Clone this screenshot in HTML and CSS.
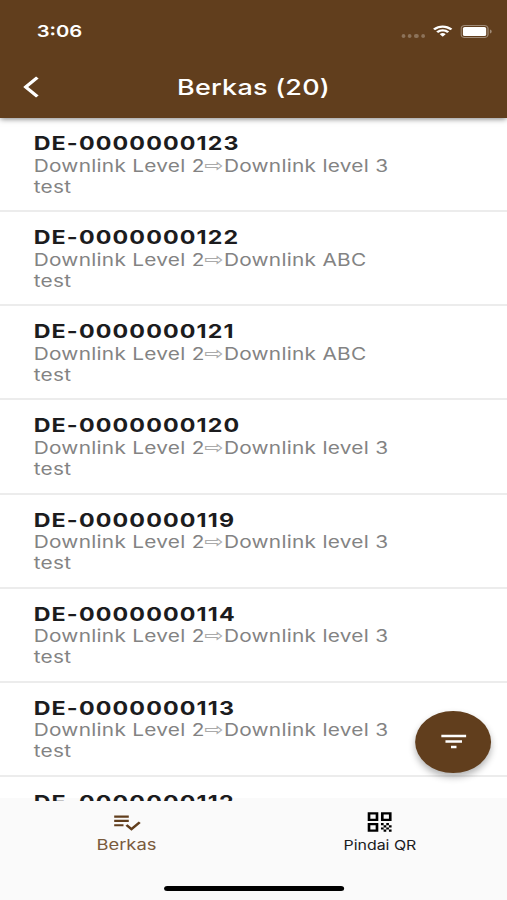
FILE: index.html
```html
<!DOCTYPE html>
<html lang="id">
<head>
<meta charset="utf-8">
<title>Berkas</title>
<link rel="stylesheet" href="styles.css">
</head>
<body>
<div class="screen">
  <header class="top">
    <div class="status">
      <span class="time">3:06</span>
      <div class="indicators">
        <div class="dots"><i></i><i></i><i></i><i></i></div>
        <svg class="wifi" viewBox="0 0 16 12"><path d="M8 2.4c2.2 0 4.2.85 5.7 2.25.1.1.3.1.4 0l1.1-1.1c.1-.1.1-.3 0-.4C11.2-.6 4.800-.6.8 3.150c-.1.1-.1.300 0 .4l1.100 1.100c.1.1.3.1.4 0A8.300 8.300 0 0 1 8 2.400zM8 6c1.200 0 2.350.45 3.250 1.250.1.1.3.1.4 0l1.100-1.100c.1-.1.1-.3 0-.4a6.900 6.900 0 0 0-9.500 0c-.1.1-.1.3 0 .4l1.100 1.100c.1.1.3.1.4 0C5.650 6.450 6.800 6 8 6zm2.200 2.700c.1-.1.1-.3 0-.4a3.400 3.400 0 0 0-4.400 0c-.1.1-.1.3 0 .4l2 2c.1.1.3.1.4 0z"/></svg>
        <svg class="battery" viewBox="0 0 26 13"><rect class="case" x=".5" y=".5" width="22" height="12" rx="3"/><rect x="2" y="2" width="19" height="9" rx="1.500"/><path class="tip" d="M24 4.500v4c1-.3 1.500-1.100 1.500-2s-.5-1.700-1.500-2z"/></svg>
      </div>
    </div>
    <div class="bar">
      <svg class="back" viewBox="0 0 13 22"><path d="M11.500 1.500 2 11l9.500 9.500"/></svg>
      <h1>Berkas (20)</h1>
    </div>
  </header>
  <main class="list">
    <article class="row"><h2>DE-0000000123</h2><p>Downlink Level 2<span class="arrow">⇨</span>Downlink level 3</p><p>test</p></article>
    <article class="row"><h2>DE-0000000122</h2><p>Downlink Level 2<span class="arrow">⇨</span>Downlink ABC</p><p>test</p></article>
    <article class="row"><h2>DE-0000000121</h2><p>Downlink Level 2<span class="arrow">⇨</span>Downlink ABC</p><p>test</p></article>
    <article class="row"><h2>DE-0000000120</h2><p>Downlink Level 2<span class="arrow">⇨</span>Downlink level 3</p><p>test</p></article>
    <article class="row"><h2>DE-0000000119</h2><p>Downlink Level 2<span class="arrow">⇨</span>Downlink level 3</p><p>test</p></article>
    <article class="row"><h2>DE-0000000114</h2><p>Downlink Level 2<span class="arrow">⇨</span>Downlink level 3</p><p>test</p></article>
    <article class="row"><h2>DE-0000000113</h2><p>Downlink Level 2<span class="arrow">⇨</span>Downlink level 3</p><p>test</p></article>
    <article class="row"><h2>DE-0000000112</h2></article>
  </main>
  <button class="fab" aria-label="Filter"><svg viewBox="0 0 24 24"><path d="M10 18h4v-2.300h-4v2.300zM3 6v2.300h18V6H3zm3 7.200h12v-2.300H6v2.300z"/></svg></button>
  <nav class="tabs">
    <a class="tab active"><svg viewBox="0 0 24 24"><path d="M14 10H3v2h11v-2zm0-4H3v2h11V6zM3 16h7v-2H3v2zm18.500-4.500L23 13l-6.990 7-4.510-4.500L13 14l3.010 3 5.490-5.500z"/></svg><span>Berkas</span></a>
    <a class="tab"><svg viewBox="0 0 24 24"><path d="M3 11h8V3H3v8zm2-6h4v4H5V5zM3 21h8v-8H3v8zm2-6h4v4H5v-4zM13 3v8h8V3h-8zm6 6h-4V5h4v4zM19 19h2v2h-2zM13 13h2v2h-2zM15 15h2v2h-2zM13 17h2v2h-2zM15 19h2v2h-2zM17 17h2v2h-2zM17 13h2v2h-2zM19 15h2v2h-2z"/></svg><span>Pindai QR</span></a>
    <div class="home"></div>
  </nav>
</div>
</body>
</html>
```
FILE: styles.css
```css
* { box-sizing: border-box; }
body { margin: 0; overflow: hidden; background: #fff; }
h1, h2, p { margin: 0; }
.screen {
  position: relative;
  display: flex;
  flex-direction: column;
  width: 414px;
  height: 900px;
  overflow: hidden;
  transform: scaleX(1.22464);
  transform-origin: 0 0;
  font-family: Inter, "Liberation Sans", sans-serif;
  color: #1c1c1e;
}
.top {
  position: relative;
  z-index: 1;
  flex: none;
  height: 118px;
  background: #613e1d;
  color: #fff;
  box-shadow: 0 1px 5px rgba(0, 0, 0, .5);
}
.status { display: flex; justify-content: space-between; height: 62px; padding: 0 12px 0 30px; }
.time { font-size: 16.500px; line-height: 63px; font-weight: 600; }
.indicators { display: flex; align-items: center; }
.dots { display: flex; gap: 2px; margin: 9px 6px 0 0; }
.dots i { width: 3.300px; height: 4px; border-radius: 50%; background: #8c7259; }
.wifi { width: 17px; height: 13px; margin-right: 6px; fill: #fff; }
.battery { width: 26px; height: 13px; fill: #fff; }
.case { fill: none; stroke: #a08b77; }
.tip { fill: #a08b77; }
.bar { display: grid; grid-template-columns: 50px 1fr 50px; align-items: center; height: 50px; }
.back { width: 13px; height: 22px; margin-left: 18.700px; fill: none; stroke: #fff; stroke-width: 3; }
h1 { font-size: 22px; line-height: 50px; font-weight: 500; letter-spacing: .2px; text-align: center; white-space: nowrap; }
/* the tab bar tint begins slightly above the end of the list */
.list { flex: 1; min-height: 0; overflow: hidden; background: linear-gradient(#fafafa, #fafafa) bottom / 100% 3px no-repeat; }
.row { height: 94.150px; padding: 15px 27.500px 0; border-bottom: 2px solid #ececec; white-space: nowrap; }
.row:last-child { border-bottom: 0; }
.row h2 { font-size: 19px; line-height: 22px; font-weight: 700; letter-spacing: .92px; }
.row p { position: relative; top: .5px; font-size: 17px; line-height: 21px; color: #838383; letter-spacing: .22px; }
.arrow { display: inline-block; width: 15.700px; font-family: "DejaVu Sans", sans-serif; font-size: 19px; line-height: 1; letter-spacing: 0; text-indent: -.5px; color: #aaa; }
.fab {
  position: absolute;
  left: 339px;
  top: 711px;
  width: 62px;
  height: 62px;
  padding: 0;
  border: 0;
  border-radius: 50%;
  background: #613e1d;
  box-shadow: 0 4px 7px rgba(0, 0, 0, .3);
}
.fab svg { display: block; width: 27px; height: 27px; margin: -1px auto 0; fill: #fff; }
.tabs {
  position: relative;
  flex: none;
  display: grid;
  grid-template-columns: 1fr 1fr;
  height: 99px;
  padding-top: 8px;
  background: #fafafa;
}
.tab { display: flex; flex-direction: column; align-items: center; font-size: 13px; line-height: 20px; color: #1c1c1e; }
.tab svg { width: 26px; height: 26px; margin-left: -.5px; fill: #000; }
.tab span { margin-left: -.5px; }
.tab.active { font-size: 15px; color: #7a5a3c; }
.tab.active svg { fill: #613e1d; }
.home { position: absolute; left: 134px; bottom: 9px; width: 147px; height: 5.500px; border-radius: 3px; background: #000; }
```
